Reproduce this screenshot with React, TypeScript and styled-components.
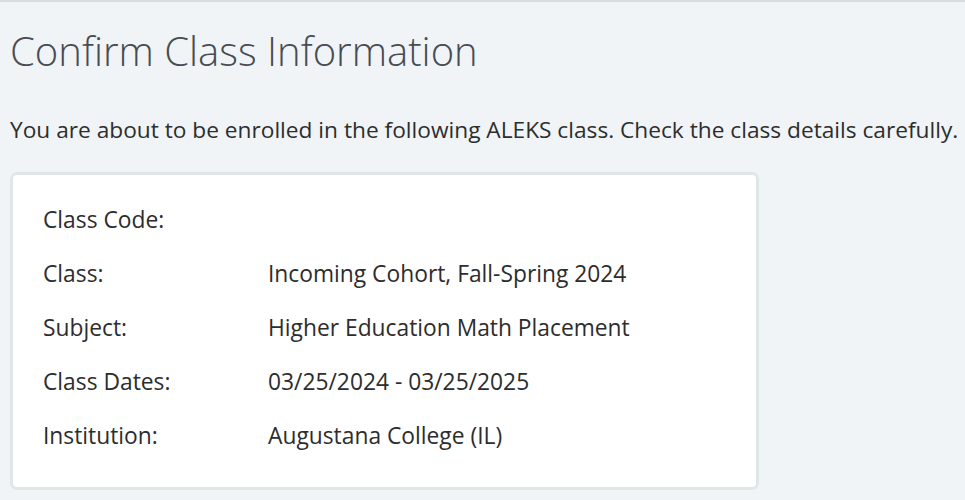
import { createGlobalStyle, styled } from "styled-components";

const GlobalStyle = createGlobalStyle`
  html, body {
    margin: 0;
    padding: 0;
    background: #f0f4f7;
  }
  body {
    font-family: "Open Sans", "Liberation Sans", sans-serif;
    color: #2d2d2d;
  }
`;

const Page = styled.div`
  border-top: 2px solid #d5dde0;
  padding: 0 10px;
  min-height: 498px;
`;

const Title = styled.h1`
  margin: 0;
  padding-top: 26px;
  font-size: 40px;
  font-weight: 300;
  line-height: 46px;
  color: #474c52;
`;

const Intro = styled.p`
  margin: 0;
  padding-top: 41px;
  font-size: 22.7px;
  line-height: 30px;
  white-space: nowrap;
`;

const Card = styled.section`
  margin-top: 27px;
  width: 749px;
  box-sizing: border-box;
  background: #fff;
  border: 3px solid #e0e7e9;
  border-radius: 7px;
  padding: 17px 30px 25px;
`;

const Row = styled.div`
  display: grid;
  grid-template-columns: 225px 1fr;
  height: 54px;
  align-items: center;
  font-size: 22.8px;
  line-height: 31px;
`;

const Label = styled.span``;
const Value = styled.span``;

const rows: [string, string][] = [
  ["Class Code:", ""],
  ["Class:", "Incoming Cohort, Fall-Spring 2024"],
  ["Subject:", "Higher Education Math Placement"],
  ["Class Dates:", "03/25/2024 - 03/25/2025"],
  ["Institution:", "Augustana College (IL)"],
];

export default function App() {
  return (
    <>
      <GlobalStyle />
      <Page>
        <Title>Confirm Class Information</Title>
        <Intro>
          You are about to be enrolled in the following ALEKS class. Check the class details carefully.
        </Intro>
        <Card>
          {rows.map(([label, value]) => (
            <Row key={label}>
              <Label>{label}</Label>
              <Value>{value}</Value>
            </Row>
          ))}
        </Card>
      </Page>
    </>
  );
}
